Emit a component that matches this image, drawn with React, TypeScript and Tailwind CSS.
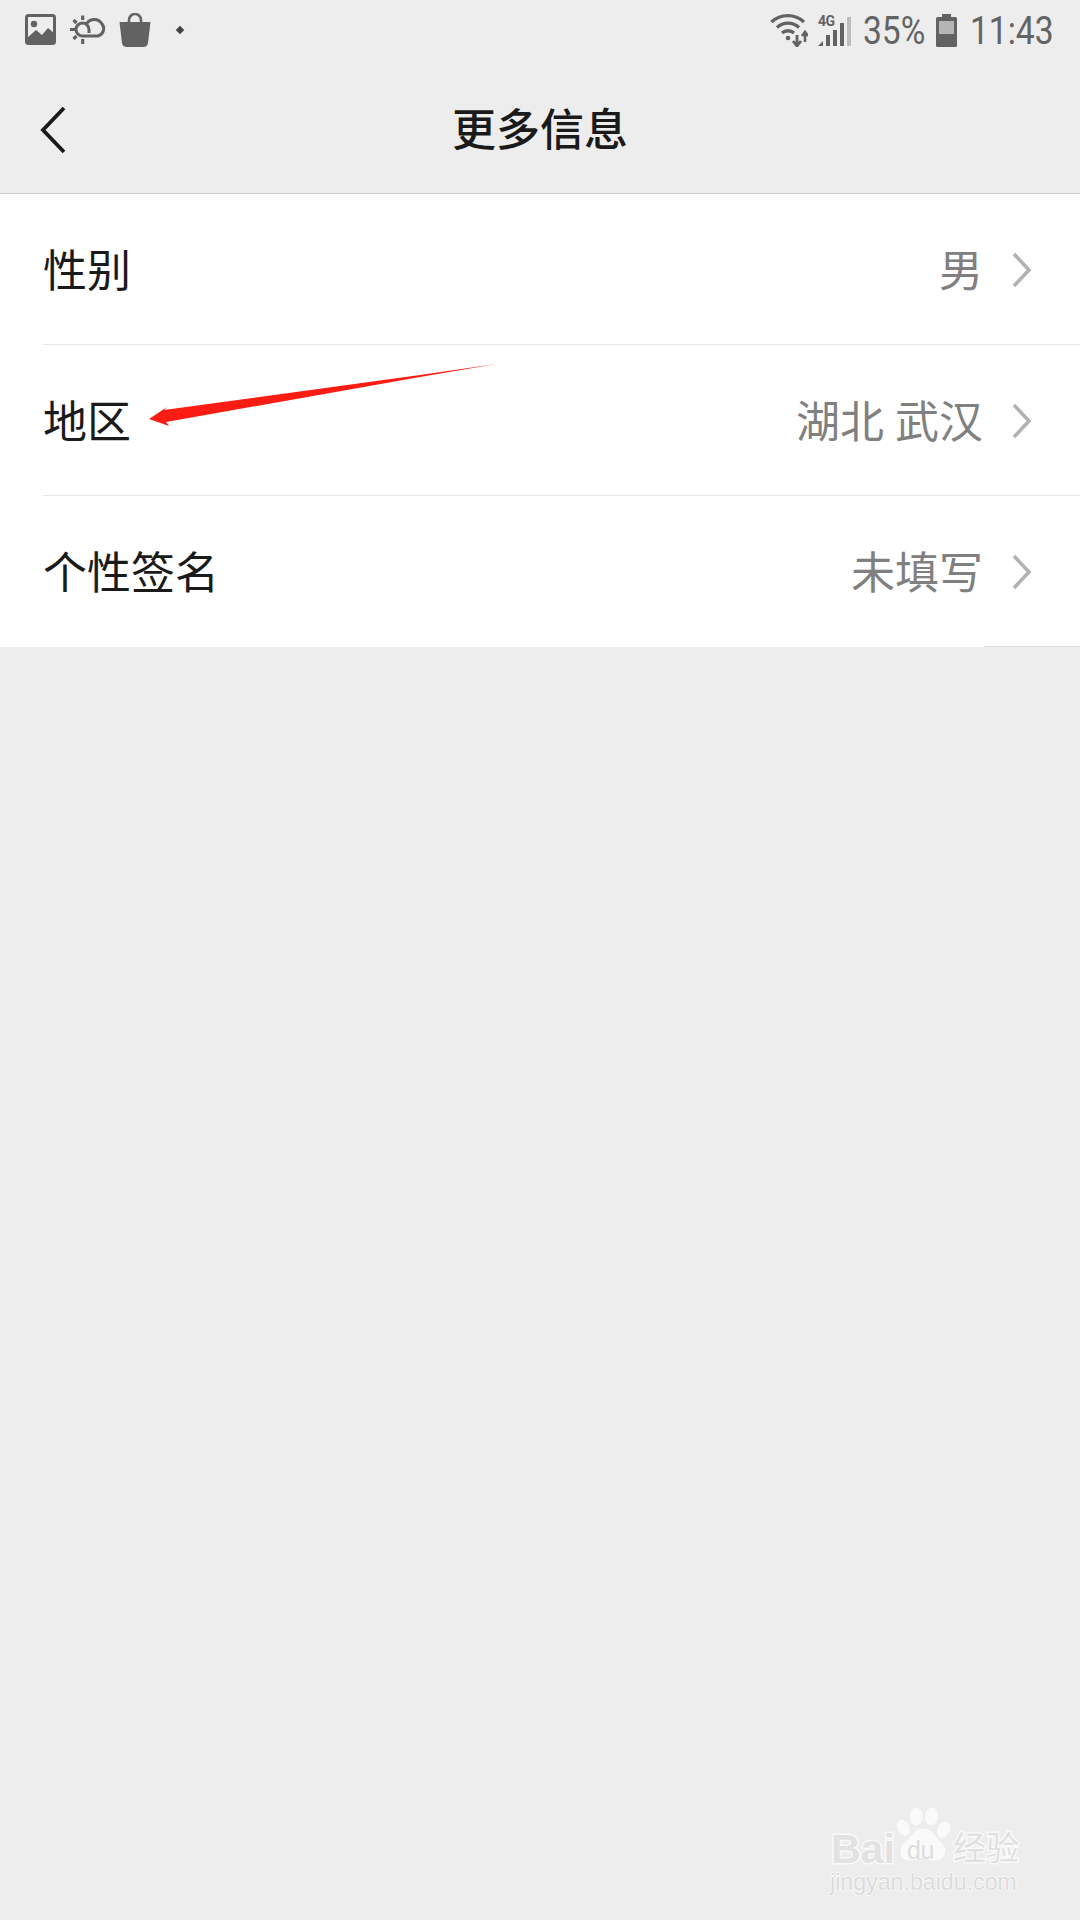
import React from "react";

const cjk = "font-['Roboto','Noto_Sans_CJK_SC',sans-serif]";

function Chevron() {
  return (
    <svg width="22" height="38" viewBox="0 0 22 38" className="ml-[28px] mb-[5px]" fill="none">
      <path d="M3 3 L18 19 L3 35" stroke="#b2b2b2" strokeWidth="3.6" />
    </svg>
  );
}

function Row({ label, value, last }: { label: string; value: string; last?: boolean }) {
  return (
    <div className="relative h-[151px] flex items-center pl-[43px] pr-[47px] pt-[5px]">
      <span className="text-[44px] leading-none text-[#1a1a1a]">{label}</span>
      <span className="ml-auto text-[44px] leading-none text-[#808080]">{value}</span>
      <Chevron />
      {!last && <div className="absolute left-[43px] right-0 bottom-0 h-px bg-[#e6e6e6]" />}
      {last && <div className="absolute left-[984px] right-0 bottom-0 h-px bg-[#dcdcdc]" />}
    </div>
  );
}

function LeftIcons() {
  return (
    <div className="flex items-center pt-[2px]">
      <svg width="32" height="32" viewBox="0 0 32 32" className="ml-[25px]">
        <rect x="1.5" y="1.5" width="28" height="28" rx="2" fill="none" stroke="#626262" strokeWidth="3" />
        <circle cx="9" cy="10" r="3.2" fill="#626262" />
        <path d="M2 30 V24 L11 16 L17 21 L23 14 L30 20 V30 Z" fill="#626262" />
      </svg>
      <svg width="38" height="30" viewBox="0 0 38 30" className="ml-[13px]" fill="none" stroke="#626262">
        <path d="M16 10 A9 9 0 0 1 32 9 A7.500 7.500 0 0 1 28 21 H13" strokeWidth="3" />
        <path d="M13 21 A6.500 6.500 0 1 1 19 14.500 V18" strokeWidth="3" />
        <path d="M0 14.500 H5 M12.700 0.500 V5 M12.700 24 V29 M3.500 5 L6.500 8 M3.500 24 L6.500 21" strokeWidth="3.200" />
      </svg>
      <svg width="32" height="35" viewBox="0 0 32 35" className="ml-[11px]">
        <path d="M10 10 V7 A6 6 0 0 1 22 7 V10" fill="none" stroke="#626262" strokeWidth="2.600" />
        <path d="M0.500 9 H31.500 L29 30 Q28.500 34 24 34 H8 Q3.500 34 3 30 Z" fill="#626262" />
      </svg>
      <div className="ml-[26px] w-[6px] h-[6px] rotate-45 bg-[#444444]" />
    </div>
  );
}

function RightIcons() {
  const statusText = "font-['Roboto',sans-serif] text-[#636363] text-[39px] leading-none origin-left scale-x-[0.86] inline-block whitespace-nowrap pt-[3px]";
  return (
    <div className="ml-auto flex items-center pt-[2px]">
      <svg width="38" height="34" viewBox="0 0 38 34" fill="none" stroke="#626262" strokeWidth="3.400">
        <path d="M1.500 9 A24 24 0 0 1 34 9" />
        <path d="M7 14.500 A16 16 0 0 1 29 14.500" />
        <path d="M12 20 A9 9 0 0 1 24 20" />
        <circle cx="18" cy="25" r="2.300" fill="#626262" stroke="none" />
        <path d="M27 22 V32 M23 28 L27 33 L31 28" strokeWidth="2.800" />
        <path d="M35 19 V29 M32 23 L35 19 L38 23" strokeWidth="2.600" />
      </svg>
      <div className="relative ml-[10px] w-[33px] h-[33px]">
        <span className="absolute left-0 top-0 font-['Roboto',sans-serif] font-bold text-[14px] leading-none text-[#626262] tracking-[-0.5px]">4G</span>
        <svg width="33" height="33" viewBox="0 0 33 33" className="absolute left-0 top-0">
          <path d="M0 32 L5 27 V32 Z" fill="#626262" />
          <rect x="8" y="21" width="4" height="11" fill="#626262" />
          <rect x="15" y="16" width="4" height="16" fill="#626262" />
          <rect x="22" y="9" width="4" height="23" fill="#626262" />
          <rect x="29" y="3" width="4" height="29" fill="#bdbdbd" />
        </svg>
      </div>
      <div className="ml-[12px] w-[73px] flex"><span className={statusText}>35%</span></div>
      <svg width="21" height="33" viewBox="0 0 21 33">
        <rect x="6" y="0" width="9" height="4" fill="#626262" />
        <rect x="0" y="3" width="21" height="30" rx="1.500" fill="#626262" />
        <rect x="3" y="7" width="15" height="13" fill="#b5b5b5" />
      </svg>
      <div className="ml-[13px] w-[84px] flex"><span className={statusText}>11:43</span></div>
    </div>
  );
}

function Watermark() {
  return (
    <div className="absolute left-[830px] top-[1805px] w-[200px] h-[95px] select-none">
      <span className="absolute left-[1px] top-[24px] font-['Liberation_Sans',sans-serif] text-[41px] leading-none font-bold text-[#e2e2e2] [-webkit-text-stroke:3px_#fafafa] [paint-order:stroke_fill]">Bai</span>
      <svg width="60" height="64" viewBox="0 0 64 64" className="absolute left-[63px] top-0" fill="#fafafa">
        <ellipse cx="11" cy="22" rx="6.500" ry="9" transform="rotate(-25 11 22)" />
        <ellipse cx="25" cy="10" rx="7" ry="9.500" />
        <ellipse cx="41" cy="10" rx="7" ry="9.500" transform="rotate(8 41 10)" />
        <ellipse cx="54" cy="24" rx="6.500" ry="9" transform="rotate(25 54 24)" />
        <path d="M32 23 C42 23 45 33 52 38 C60 46 54 58 44 57 C38 57 36 54 32 54 C28 54 25 57 19 57 C9 58 4 46 12 38 C19 33 22 23 32 23 Z" />
      </svg>
      <span className="absolute left-[77px] top-[33px] font-['Liberation_Sans',sans-serif] text-[25px] leading-none text-[#dddddd] tracking-[-0.5px]">du</span>
      <span className={`absolute left-[123px] top-[27px] ${cjk} text-[33px] leading-none text-[#e0e0e0] [-webkit-text-stroke:3px_#fafafa] [paint-order:stroke_fill] whitespace-nowrap`}>经验</span>
      <span className="absolute left-0 top-[66px] font-['Liberation_Sans',sans-serif] text-[23.200px] leading-none text-[#dcdcdc] [-webkit-text-stroke:1.500px_#fafafa] [paint-order:stroke_fill] whitespace-nowrap">jingyan.baidu.com</span>
    </div>
  );
}

export default function App() {
  return (
    <div className={`relative w-[1080px] h-[1920px] overflow-hidden bg-[#ededed] ${cjk}`}>
      <div className="h-[58px] flex items-center pr-[26px]">
        <LeftIcons />
        <RightIcons />
      </div>
      <div className="relative h-[136px] border-b border-[#cfcfcf] flex items-center justify-center pt-[10px]">
        <svg width="26" height="48" viewBox="0 0 26 48" className="absolute left-[40px] top-[48px]" fill="none">
          <path d="M24 2 L3 24 L24 46" stroke="#1a1a1a" strokeWidth="3.800" />
        </svg>
        <span className="text-[44px] leading-none font-medium text-[#1a1a1a]">更多信息</span>
      </div>
      <div className="bg-white">
        <Row label="性别" value="男" />
        <Row label="地区" value="湖北 武汉" />
        <Row label="个性签名" value="未填写" last />
      </div>
      <svg width="1080" height="1920" className="absolute left-0 top-0 pointer-events-none">
        <path d="M496 364 L420 375 L164 410 L167 407 L149 419 L169 426 L166 422 L420 377 Z" fill="#fb1c13" />
      </svg>
      <Watermark />
    </div>
  );
}
